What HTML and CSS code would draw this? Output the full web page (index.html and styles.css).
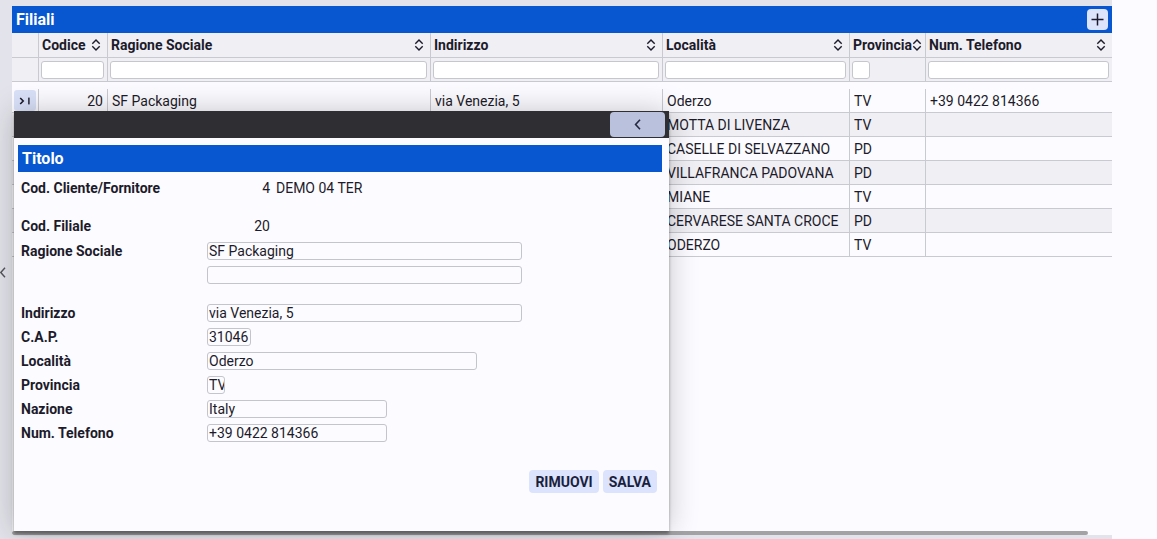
FILE: index.html
```html
<!DOCTYPE html>
<html lang="it">
<head>
<meta charset="utf-8">
<title>Filiali</title>
<link rel="stylesheet" href="styles.css">
</head>
<body>
<div class="page">
  <main class="main">
    <section class="panel">
      <div class="titlebar">
        <span class="title">Filiali</span>
        <button class="add" type="button" aria-label="Aggiungi">
          <svg width="13" height="13" viewBox="0 0 13 13"><path d="M6.5 0.5V12.5M0.5 6.5H12.5" stroke="#1c1b2b" stroke-width="1.5" fill="none"/></svg>
        </button>
      </div>

      <div class="row head">
        <div class="cell"></div>
        <div class="cell"><span>Codice</span><svg class="sort" width="10" height="12" viewBox="0 0 10 12"><path d="M1.3 4.8L5 1.1L8.7 4.8M1.3 7.2L5 10.9L8.7 7.2" stroke="#1c1b2b" stroke-width="1.4" fill="none"/></svg></div>
        <div class="cell"><span>Ragione Sociale</span><svg class="sort" width="10" height="12" viewBox="0 0 10 12"><path d="M1.3 4.8L5 1.1L8.7 4.8M1.3 7.2L5 10.9L8.7 7.2" stroke="#1c1b2b" stroke-width="1.4" fill="none"/></svg></div>
        <div class="cell"><span>Indirizzo</span><svg class="sort" width="10" height="12" viewBox="0 0 10 12"><path d="M1.3 4.8L5 1.1L8.7 4.8M1.3 7.2L5 10.9L8.7 7.2" stroke="#1c1b2b" stroke-width="1.4" fill="none"/></svg></div>
        <div class="cell"><span>Località</span><svg class="sort" width="10" height="12" viewBox="0 0 10 12"><path d="M1.3 4.8L5 1.1L8.7 4.8M1.3 7.2L5 10.9L8.7 7.2" stroke="#1c1b2b" stroke-width="1.4" fill="none"/></svg></div>
        <div class="cell tight"><span>Provincia</span><svg class="sort" width="10" height="12" viewBox="0 0 10 12"><path d="M1.3 4.8L5 1.1L8.7 4.8M1.3 7.2L5 10.9L8.7 7.2" stroke="#1c1b2b" stroke-width="1.4" fill="none"/></svg></div>
        <div class="cell"><span>Num. Telefono</span><svg class="sort" width="10" height="12" viewBox="0 0 10 12"><path d="M1.3 4.8L5 1.1L8.7 4.8M1.3 7.2L5 10.9L8.7 7.2" stroke="#1c1b2b" stroke-width="1.4" fill="none"/></svg></div>
      </div>

      <div class="row filters">
        <div class="cell"></div>
        <div class="cell"><input class="filter" type="text"></div>
        <div class="cell"><input class="filter" type="text"></div>
        <div class="cell"><input class="filter" type="text"></div>
        <div class="cell"><input class="filter" type="text"></div>
        <div class="cell"><input class="filter filter-xs" type="text"></div>
        <div class="cell"><input class="filter" type="text"></div>
      </div>

      <div class="body">
        <div class="row data">
          <div class="cell sel"><button class="go" type="button" aria-label="Apri"><svg width="12" height="8" viewBox="0 0 12 8"><path d="M1.2 1L4.2 4L1.2 7" stroke="#1c1b2b" stroke-width="1.6" fill="none"/><rect x="9.2" y="0.6" width="1.4" height="6.8" fill="#1c1b2b"/></svg></button></div>
          <div class="cell num">20</div>
          <div class="cell">SF Packaging</div>
          <div class="cell">via Venezia, 5</div>
          <div class="cell">Oderzo</div>
          <div class="cell">TV</div>
          <div class="cell">+39 0422 814366</div>
        </div>
        <div class="row data alt">
          <div class="cell"></div><div class="cell num"></div><div class="cell"></div><div class="cell"></div>
          <div class="cell">MOTTA DI LIVENZA</div><div class="cell">TV</div><div class="cell"></div>
        </div>
        <div class="row data">
          <div class="cell"></div><div class="cell num"></div><div class="cell"></div><div class="cell"></div>
          <div class="cell">CASELLE DI SELVAZZANO</div><div class="cell">PD</div><div class="cell"></div>
        </div>
        <div class="row data alt">
          <div class="cell"></div><div class="cell num"></div><div class="cell"></div><div class="cell"></div>
          <div class="cell">VILLAFRANCA PADOVANA</div><div class="cell">PD</div><div class="cell"></div>
        </div>
        <div class="row data">
          <div class="cell"></div><div class="cell num"></div><div class="cell"></div><div class="cell"></div>
          <div class="cell">MIANE</div><div class="cell">TV</div><div class="cell"></div>
        </div>
        <div class="row data alt">
          <div class="cell"></div><div class="cell num"></div><div class="cell"></div><div class="cell"></div>
          <div class="cell">CERVARESE SANTA CROCE</div><div class="cell">PD</div><div class="cell"></div>
        </div>
        <div class="row data">
          <div class="cell"></div><div class="cell num"></div><div class="cell"></div><div class="cell"></div>
          <div class="cell">ODERZO</div><div class="cell">TV</div><div class="cell"></div>
        </div>
      </div>

      <div class="hscroll"></div>
    </section>
  </main>
  <aside class="side"></aside>

  <span class="edge-handle"><svg width="6" height="11" viewBox="0 0 6 11"><path d="M5 0.8L0.8 5.5L5 10.2" stroke="#55555f" stroke-width="1.4" fill="none"/></svg></span>

  <div class="dialog">
    <div class="dialog-bar">
      <button class="back" type="button" aria-label="Indietro">
        <svg width="8" height="11" viewBox="0 0 8 11"><path d="M6 0.8L1.6 5.5L6 10.2" stroke="#262a40" stroke-width="1.6" fill="none"/></svg>
      </button>
    </div>
    <div class="dialog-body">
      <div class="form-title">Titolo</div>
      <div class="form">
        <div class="frow first">
          <span class="lbl">Cod. Cliente/Fornitore</span>
          <div class="val"><span class="numval">4</span><span>DEMO 04 TER</span></div>
        </div>
        <div class="frow sep">
          <span class="lbl">Cod. Filiale</span>
          <div class="val"><span class="numval">20</span></div>
        </div>
        <div class="frow tick">
          <span class="lbl">Ragione Sociale</span>
          <div class="val"><input class="fin w-lg" type="text" value="SF Packaging"></div>
        </div>
        <div class="frow">
          <span class="lbl"></span>
          <div class="val"><input class="fin w-lg" type="text" value=""></div>
        </div>
        <div class="frow sep">
          <span class="lbl">Indirizzo</span>
          <div class="val"><input class="fin w-lg" type="text" value="via Venezia, 5"></div>
        </div>
        <div class="frow">
          <span class="lbl">C.A.P.</span>
          <div class="val"><input class="fin w-cap" type="text" value="31046"></div>
        </div>
        <div class="frow">
          <span class="lbl">Località</span>
          <div class="val"><input class="fin w-md" type="text" value="Oderzo"></div>
        </div>
        <div class="frow">
          <span class="lbl">Provincia</span>
          <div class="val"><input class="fin w-xs" type="text" value="TV"></div>
        </div>
        <div class="frow">
          <span class="lbl">Nazione</span>
          <div class="val"><input class="fin w-sm" type="text" value="Italy"></div>
        </div>
        <div class="frow">
          <span class="lbl">Num. Telefono</span>
          <div class="val"><input class="fin w-sm" type="text" value="+39 0422 814366"></div>
        </div>
      </div>
      <div class="actions">
        <button class="btn" type="button">RIMUOVI</button>
        <button class="btn" type="button">SALVA</button>
      </div>
    </div>
  </div>
</div>
</body>
</html>
```

FILE: styles.css
```css
* { box-sizing: border-box; }

html, body {
  margin: 0;
  padding: 0;
}

body {
  font-family: Roboto, "Liberation Sans", sans-serif;
  font-size: 14px;
  color: #1c1b2b;
  background: #fcfbff;
  overflow: hidden;
}

.page {
  position: relative;
  display: flex;
  height: 539px;
}

.main {
  width: 1112px;
  flex: none;
  background: #e3e3eb;
  padding: 6px 0 4px 12px;
  display: flex;
}

.side {
  flex: 1;
  background: #fcfbff;
}

.panel {
  width: 1100px;
  background: #fcfbff;
  display: flex;
  flex-direction: column;
}

/* title bar */
.titlebar {
  height: 27px;
  flex: none;
  background: #0857d0;
  display: flex;
  align-items: center;
  justify-content: space-between;
  padding: 0 4px;
}

.title {
  color: #ffffff;
  font-weight: 700;
  font-size: 16px;
}

.add {
  width: 21px;
  height: 21px;
  border: 0;
  border-radius: 4px;
  background: #dce4fc;
  padding: 0;
  display: flex;
  align-items: center;
  justify-content: center;
}

/* table rows */
.row {
  display: grid;
  grid-template-columns: 26px 69px 323px 232px 187px 76px 187px;
  height: 24px;
  flex: none;
  border-bottom: 1px solid #c9c9d1;
}

.cell {
  border-left: 1px solid #c9c9d1;
  display: flex;
  align-items: center;
  padding: 0 4px;
  white-space: nowrap;
  overflow: hidden;
  min-width: 0;
}

.cell:first-child {
  border-left: 0;
}

.head {
  height: 25px;
  background: #f0eff4;
}

.head .cell {
  justify-content: space-between;
  font-weight: 700;
  padding: 0 6px 0 3px;
}

.head .cell.tight {
  justify-content: flex-start;
}

.sort {
  flex: none;
}

.filters {
  background: #f0eff4;
}

.filters .cell {
  padding: 0 3px 0 2px;
}

.filter {
  width: 100%;
  height: 18px;
  border: 1px solid #c6c6ce;
  border-radius: 3px;
  background: #ffffff;
  padding: 0 2px;
  font: inherit;
  margin: 0;
}

.filter-xs {
  width: 18px;
}

.body {
  margin-top: 7px;
  display: flex;
  flex-direction: column;
}

.data {
  background: #fcfbff;
}

.data.alt {
  background: #f0eff4;
}

.data .num {
  justify-content: flex-end;
}

.data .sel {
  padding: 0 0 0 2px;
}

.go {
  width: 22px;
  height: 21px;
  border: 0;
  border-radius: 3px;
  background: #d9e1f9;
  padding: 0;
  display: flex;
  align-items: center;
  justify-content: center;
}

.hscroll {
  margin-top: auto;
  height: 4px;
  margin-right: 24px;
  background: #a3a3a6;
  border-radius: 2px;
  flex: none;
}

.edge-handle {
  position: absolute;
  left: 0;
  top: 267px;
  display: block;
  line-height: 0;
}

/* dialog */
.dialog {
  position: absolute;
  left: 14px;
  top: 111px;
  width: 655px;
  height: 420px;
  background: #fcfbff;
  box-shadow: 0 3px 3px rgba(0, 0, 0, 0.35), 0 0 28px rgba(0, 0, 0, 0.22);
  display: flex;
  flex-direction: column;
}

.dialog-bar {
  height: 27px;
  flex: none;
  background: #2f2f33;
  display: flex;
  justify-content: flex-end;
  align-items: flex-start;
  padding: 1px 4px 0 0;
}

.back {
  width: 55px;
  height: 25px;
  border: 0;
  border-radius: 4px;
  background: #b9c1dc;
  padding: 0;
  display: flex;
  align-items: center;
  justify-content: center;
}

.dialog-body {
  flex: 1;
  padding: 7px 7px 0 4px;
  display: flex;
  flex-direction: column;
}

.form-title {
  height: 27px;
  background: #0857d0;
  color: #ffffff;
  font-weight: 700;
  font-size: 16px;
  line-height: 27px;
  padding-left: 4px;
}

.form {
  padding-left: 3px;
  display: flex;
  flex-direction: column;
}

.frow {
  display: grid;
  grid-template-columns: 186px 1fr;
  height: 24px;
  align-items: center;
}

.frow.first {
  margin-top: 4px;
}

.frow.sep {
  margin-top: 14px;
}

.frow.tick {
  margin-top: 1px;
}

.lbl {
  font-weight: 700;
  white-space: nowrap;
}

.val {
  display: flex;
  align-items: center;
  gap: 6px;
}

.numval {
  width: 63px;
  text-align: right;
}

.fin {
  height: 18px;
  border: 1px solid #c4c4cc;
  border-radius: 3px;
  background: #fcfbff;
  padding: 0 0 0 1px;
  font: inherit;
  color: #1c1b2b;
  margin: 0;
}

.w-lg { width: 315px; }
.w-md { width: 270px; }
.w-sm { width: 180px; }
.w-cap { width: 44px; }
.w-xs { width: 18px; }

.actions {
  margin-top: 25px;
  display: flex;
  justify-content: flex-end;
  gap: 4px;
  padding-right: 5px;
}

.btn {
  height: 23px;
  border: 0;
  border-radius: 4px;
  background: #dbe3fd;
  color: #1a1f3d;
  font: inherit;
  font-weight: 700;
  padding: 0 6px;
}
```
